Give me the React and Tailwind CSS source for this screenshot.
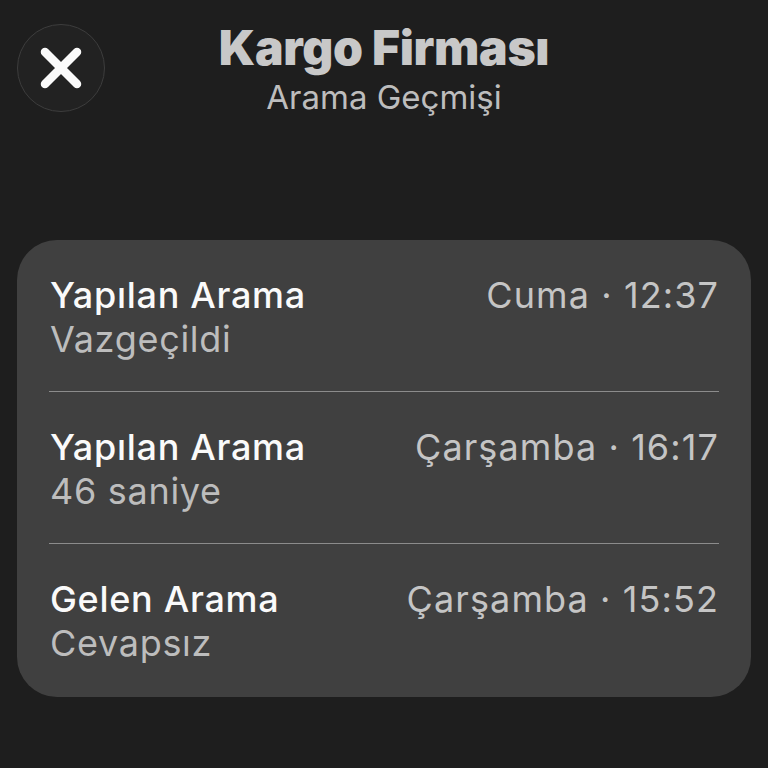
const calls = [
  { title: "Yapılan Arama", detail: "Vazgeçildi", when: "Cuma · 12:37" },
  { title: "Yapılan Arama", detail: "46 saniye", when: "Çarşamba · 16:17" },
  { title: "Gelen Arama", detail: "Cevapsız", when: "Çarşamba · 15:52" },
]

export default function App() {
  return (
    <div
      className="w-[768px] h-[768px] bg-[#1e1e1e] overflow-hidden"
      style={{ fontFamily: "Inter, 'Noto Sans', sans-serif" }}
    >
      <header className="relative h-[240px]">
        <button className="absolute left-[17px] top-[24px] w-[88px] h-[88px] rounded-full bg-[#222222] border-[1.5px] border-[#3d3d3d] flex items-center justify-center">
          <svg width="42" height="42" viewBox="0 0 42 42">
            <path d="M5 5 L37 37 M37 5 L5 37" stroke="#fafafa" strokeWidth="8.5" strokeLinecap="round" />
          </svg>
        </button>
        <div className="pt-[22px] flex flex-col items-center">
          <h1 className="text-[48px] leading-[52px] font-black tracking-[-0.3px] text-[#c8c8c8]">
            Kargo Firması
          </h1>
          <p className="mt-[3px] text-[33px] leading-[40px] text-[#bdbdbd]">Arama Geçmişi</p>
        </div>
      </header>

      <div className="mx-[17px] bg-[#404040] rounded-[40px] px-[32px]">
        {calls.map((c, i) => (
          <div
            key={i}
            className={
              "flex justify-between pt-[33px] " +
              (i < calls.length - 1 ? "pb-[30px] border-b border-[#8c8c8c]" : "pb-[32px]")
            }
          >
            <div className="flex flex-col pl-[1px]">
              <span className="text-[36px] leading-[44px] font-medium tracking-[0.7px] text-[#fafafa]">{c.title}</span>
              <span className="text-[36px] leading-[44px] tracking-[0.7px] text-[#bdbdbd]">{c.detail}</span>
            </div>
            <span className="text-[36px] leading-[44px] tracking-[1.1px] text-[#c5c5c5]">{c.when}</span>
          </div>
        ))}
      </div>
    </div>
  )
}
